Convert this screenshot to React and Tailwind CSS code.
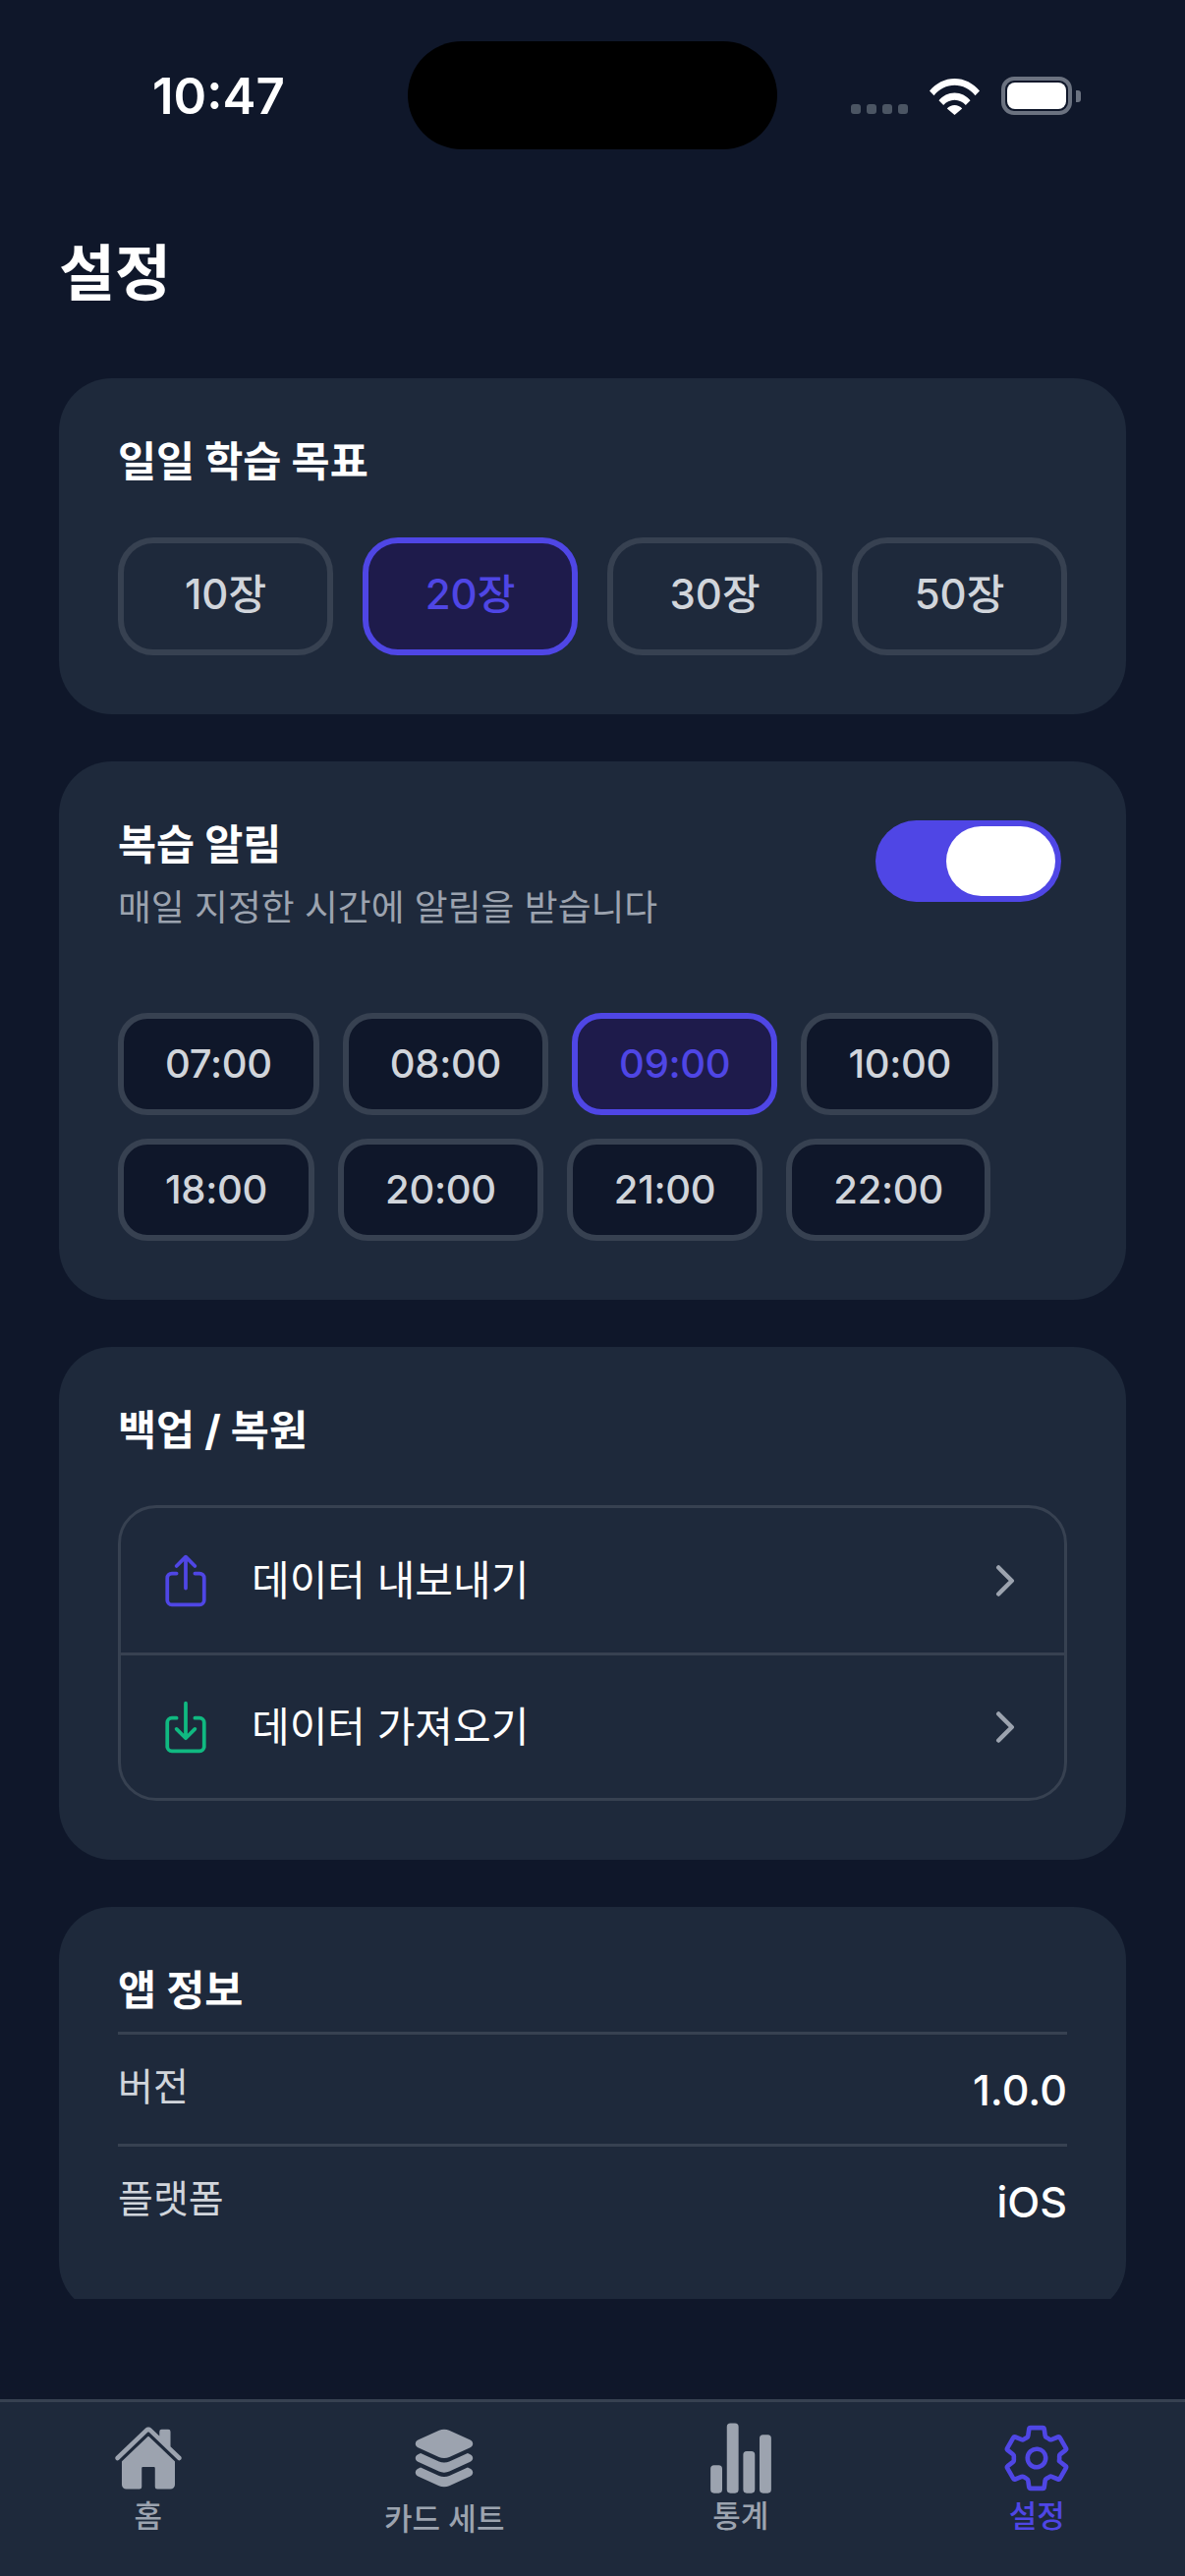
import { IoHome, IoLayers, IoStatsChart, IoSettingsOutline, IoShareOutline, IoDownloadOutline, IoChevronForward } from 'react-icons/io5'

const GOALS = ['10장', '20장', '30장', '50장']
const TIMES = [
  ['07:00', '08:00', '09:00', '10:00'],
  ['18:00', '20:00', '21:00', '22:00'],
]
const TABS = [
  { label: '홈', icon: IoHome },
  { label: '카드 세트', icon: IoLayers, labelClass: 'mt-[6px]' },
  { label: '통계', icon: IoStatsChart, iconClass: 'h-[76px] w-[76px] -my-[2px]' },
  { label: '설정', icon: IoSettingsOutline, iconClass: 'h-[74px] w-[74px] -my-[1px]', active: true },
]

function SectionTitle({ children, className = '' }) {
  return <h2 className={`text-[42.5px] leading-[50px] font-bold text-white ${className}`}>{children}</h2>
}

function Card({ children }) {
  return <section className="shrink-0 rounded-[54px] bg-[#1e293b] p-[60px]">{children}</section>
}

function StatusBar() {
  return (
    <div className="relative h-[162px] shrink-0">
      <div className="absolute left-[415px] top-[42px] h-[110px] w-[376px] rounded-[55px] bg-black" />
      <div className="flex items-start justify-between pl-[155px] pr-[106px] pt-[68px]">
        <span className="text-[51px] leading-[60px] font-semibold text-white">10:47</span>
        <div className="flex items-end pt-[10px]">
          <div className="mb-[1px] mr-[22px] flex gap-[6px]">
            <i className="h-[10px] w-[10px] rounded-[3px] bg-[#4b5563]" />
            <i className="h-[10px] w-[10px] rounded-[3px] bg-[#4b5563]" />
            <i className="h-[10px] w-[10px] rounded-[3px] bg-[#4b5563]" />
            <i className="h-[10px] w-[10px] rounded-[3px] bg-[#4b5563]" />
          </div>
          <svg className="mr-[22px] h-[37px] w-[51px]" viewBox="0 0 51 37" fill="#fff">
            <path d="M0 12.5C6.5 4.8 15.500 0 25.500 0S44.500 4.800 51 12.500l-4.500 4.700C41 10.800 33.700 6.800 25.500 6.800S10 10.800 4.500 17.200z" />
            <path d="M9.500 22.200c4-4.700 9.700-7.700 16-7.700s12 3 16 7.700l-4.700 4.800c-2.800-3.200-6.800-5.300-11.300-5.300s-8.500 2.100-11.300 5.300z" />
            <path d="M17.800 30.500c1.900-2.200 4.700-3.600 7.700-3.600s5.800 1.400 7.700 3.600L25.500 37z" />
          </svg>
          <div className="flex items-center">
            <div className="flex h-[39px] w-[72px] rounded-[13px] border-[4px] border-[#6b7280] p-[2px]">
              <div className="flex-1 rounded-[8px] bg-white" />
            </div>
            <div className="ml-[4px] h-[12px] w-[5px] rounded-r-[3px] bg-[#6b7280]" />
          </div>
        </div>
      </div>
    </div>
  )
}

function GoalCard() {
  return (
    <Card>
      <SectionTitle className="mb-[52px]">일일 학습 목표</SectionTitle>
      <div className="flex gap-[30px]">
        {GOALS.map((goal) => (
          <button
            key={goal}
            className={`h-[120px] flex-1 rounded-[36px] border-[6px] pb-[6px] text-[42px] font-medium ${
              goal === '20장' ? 'border-[#4f46e5] bg-[#1e1b4b] text-[#4f46e5]' : 'border-[#374151] text-[#d1d5db]'
            }`}
          >
            {goal}
          </button>
        ))}
      </div>
    </Card>
  )
}

function ReminderCard() {
  return (
    <Card>
      <div className="mb-[82px] flex items-start justify-between">
        <div>
          <SectionTitle className="mb-[14px]">복습 알림</SectionTitle>
          <p className="text-[36.8px] leading-[50px] text-[#9ca3af]">매일 지정한 시간에 알림을 받습니다</p>
        </div>
        <div className="mr-[6px] flex h-[83px] w-[189px] justify-end rounded-[42px] bg-[#4f46e5] p-[6px] pt-[6px]">
          <div className="h-[71px] w-[111px] rounded-[36px] bg-white" />
        </div>
      </div>
      <div className="flex flex-col gap-[24px]">
        {TIMES.map((row, i) => (
          <div key={i} className="flex gap-[24px]">
            {row.map((time) => (
              <button
                key={time}
                className={`h-[104px] rounded-[30px] border-[6px] px-[42px] text-[40px] font-medium tracking-[-0.3px] ${
                  time === '09:00' ? 'border-[#4f46e5] bg-[#1e1b4b] text-[#4f46e5]' : 'border-[#374151] bg-[#0f172a] text-[#d1d5db]'
                }`}
              >
                {time}
              </button>
            ))}
          </div>
        ))}
      </div>
    </Card>
  )
}

function BackupCard() {
  return (
    <Card>
      <SectionTitle className="mb-[51px]">백업 / 복원</SectionTitle>
      <div className="rounded-[39px] border-[3px] border-[#374151]">
        <div className="flex h-[150px] items-center border-b-[3px] border-[#374151] pl-[36px] pr-[36px]">
          <IoShareOutline className="h-[60px] w-[60px] shrink-0 text-[#4f46e5]" />
          <span className="ml-[37px] flex-1 text-[42px] text-white">데이터 내보내기</span>
          <IoChevronForward className="h-[48px] w-[48px] text-[#9ca3af]" />
        </div>
        <div className="flex h-[145px] items-center pl-[36px] pr-[36px]">
          <IoDownloadOutline className="h-[60px] w-[60px] shrink-0 text-[#10b981]" />
          <span className="ml-[37px] flex-1 text-[42px] text-white">데이터 가져오기</span>
          <IoChevronForward className="h-[48px] w-[48px] text-[#9ca3af]" />
        </div>
      </div>
    </Card>
  )
}

function InfoRow({ label, value }) {
  return (
    <div className="flex h-[114px] items-center justify-between border-t-[3px] border-[#374151]">
      <span className="mb-[4px] text-[39px] text-[#d1d5db]">{label}</span>
      <span className="mt-[2px] text-[43px] font-medium text-white">{value}</span>
    </div>
  )
}

function AboutCard() {
  return (
    <Card>
      <SectionTitle className="mb-[17px]">앱 정보</SectionTitle>
      <InfoRow label="버전" value="1.0.0" />
      <InfoRow label="플랫폼" value="iOS" />
    </Card>
  )
}

function TabBar() {
  return (
    <nav className="grid h-[180px] shrink-0 grid-cols-4 border-t-[3px] border-[#374151] bg-[#1e293b] pt-[21px]">
      {TABS.map(({ label, icon: Icon, active, labelClass = 'mt-[3px]', iconClass = 'h-[72px] w-[72px]' }) => (
        <div key={label} className={`flex flex-col items-center ${active ? 'text-[#4f46e5]' : 'text-[#9ca3af]'}`}>
          <Icon className={iconClass} />
          <span className={`text-[31px] leading-[40px] font-medium ${labelClass}`}>{label}</span>
        </div>
      ))}
    </nav>
  )
}

export default function App() {
  return (
    <div className="flex h-[2622px] w-[1206px] flex-col bg-[#0f172a] font-['Inter','Noto_Sans_CJK_KR',sans-serif]">
      <StatusBar />
      <main className="h-[2178px] shrink-0 overflow-hidden px-[60px]">
        <h1 className="mb-[44px] h-[179px] pt-[77px] text-[62px] leading-[80px] font-bold text-white">설정</h1>
        <div className="flex flex-col gap-[48px]">
          <GoalCard />
          <ReminderCard />
          <BackupCard />
          <AboutCard />
        </div>
      </main>
      <div className="flex-1" />
      <TabBar />
    </div>
  )
}
